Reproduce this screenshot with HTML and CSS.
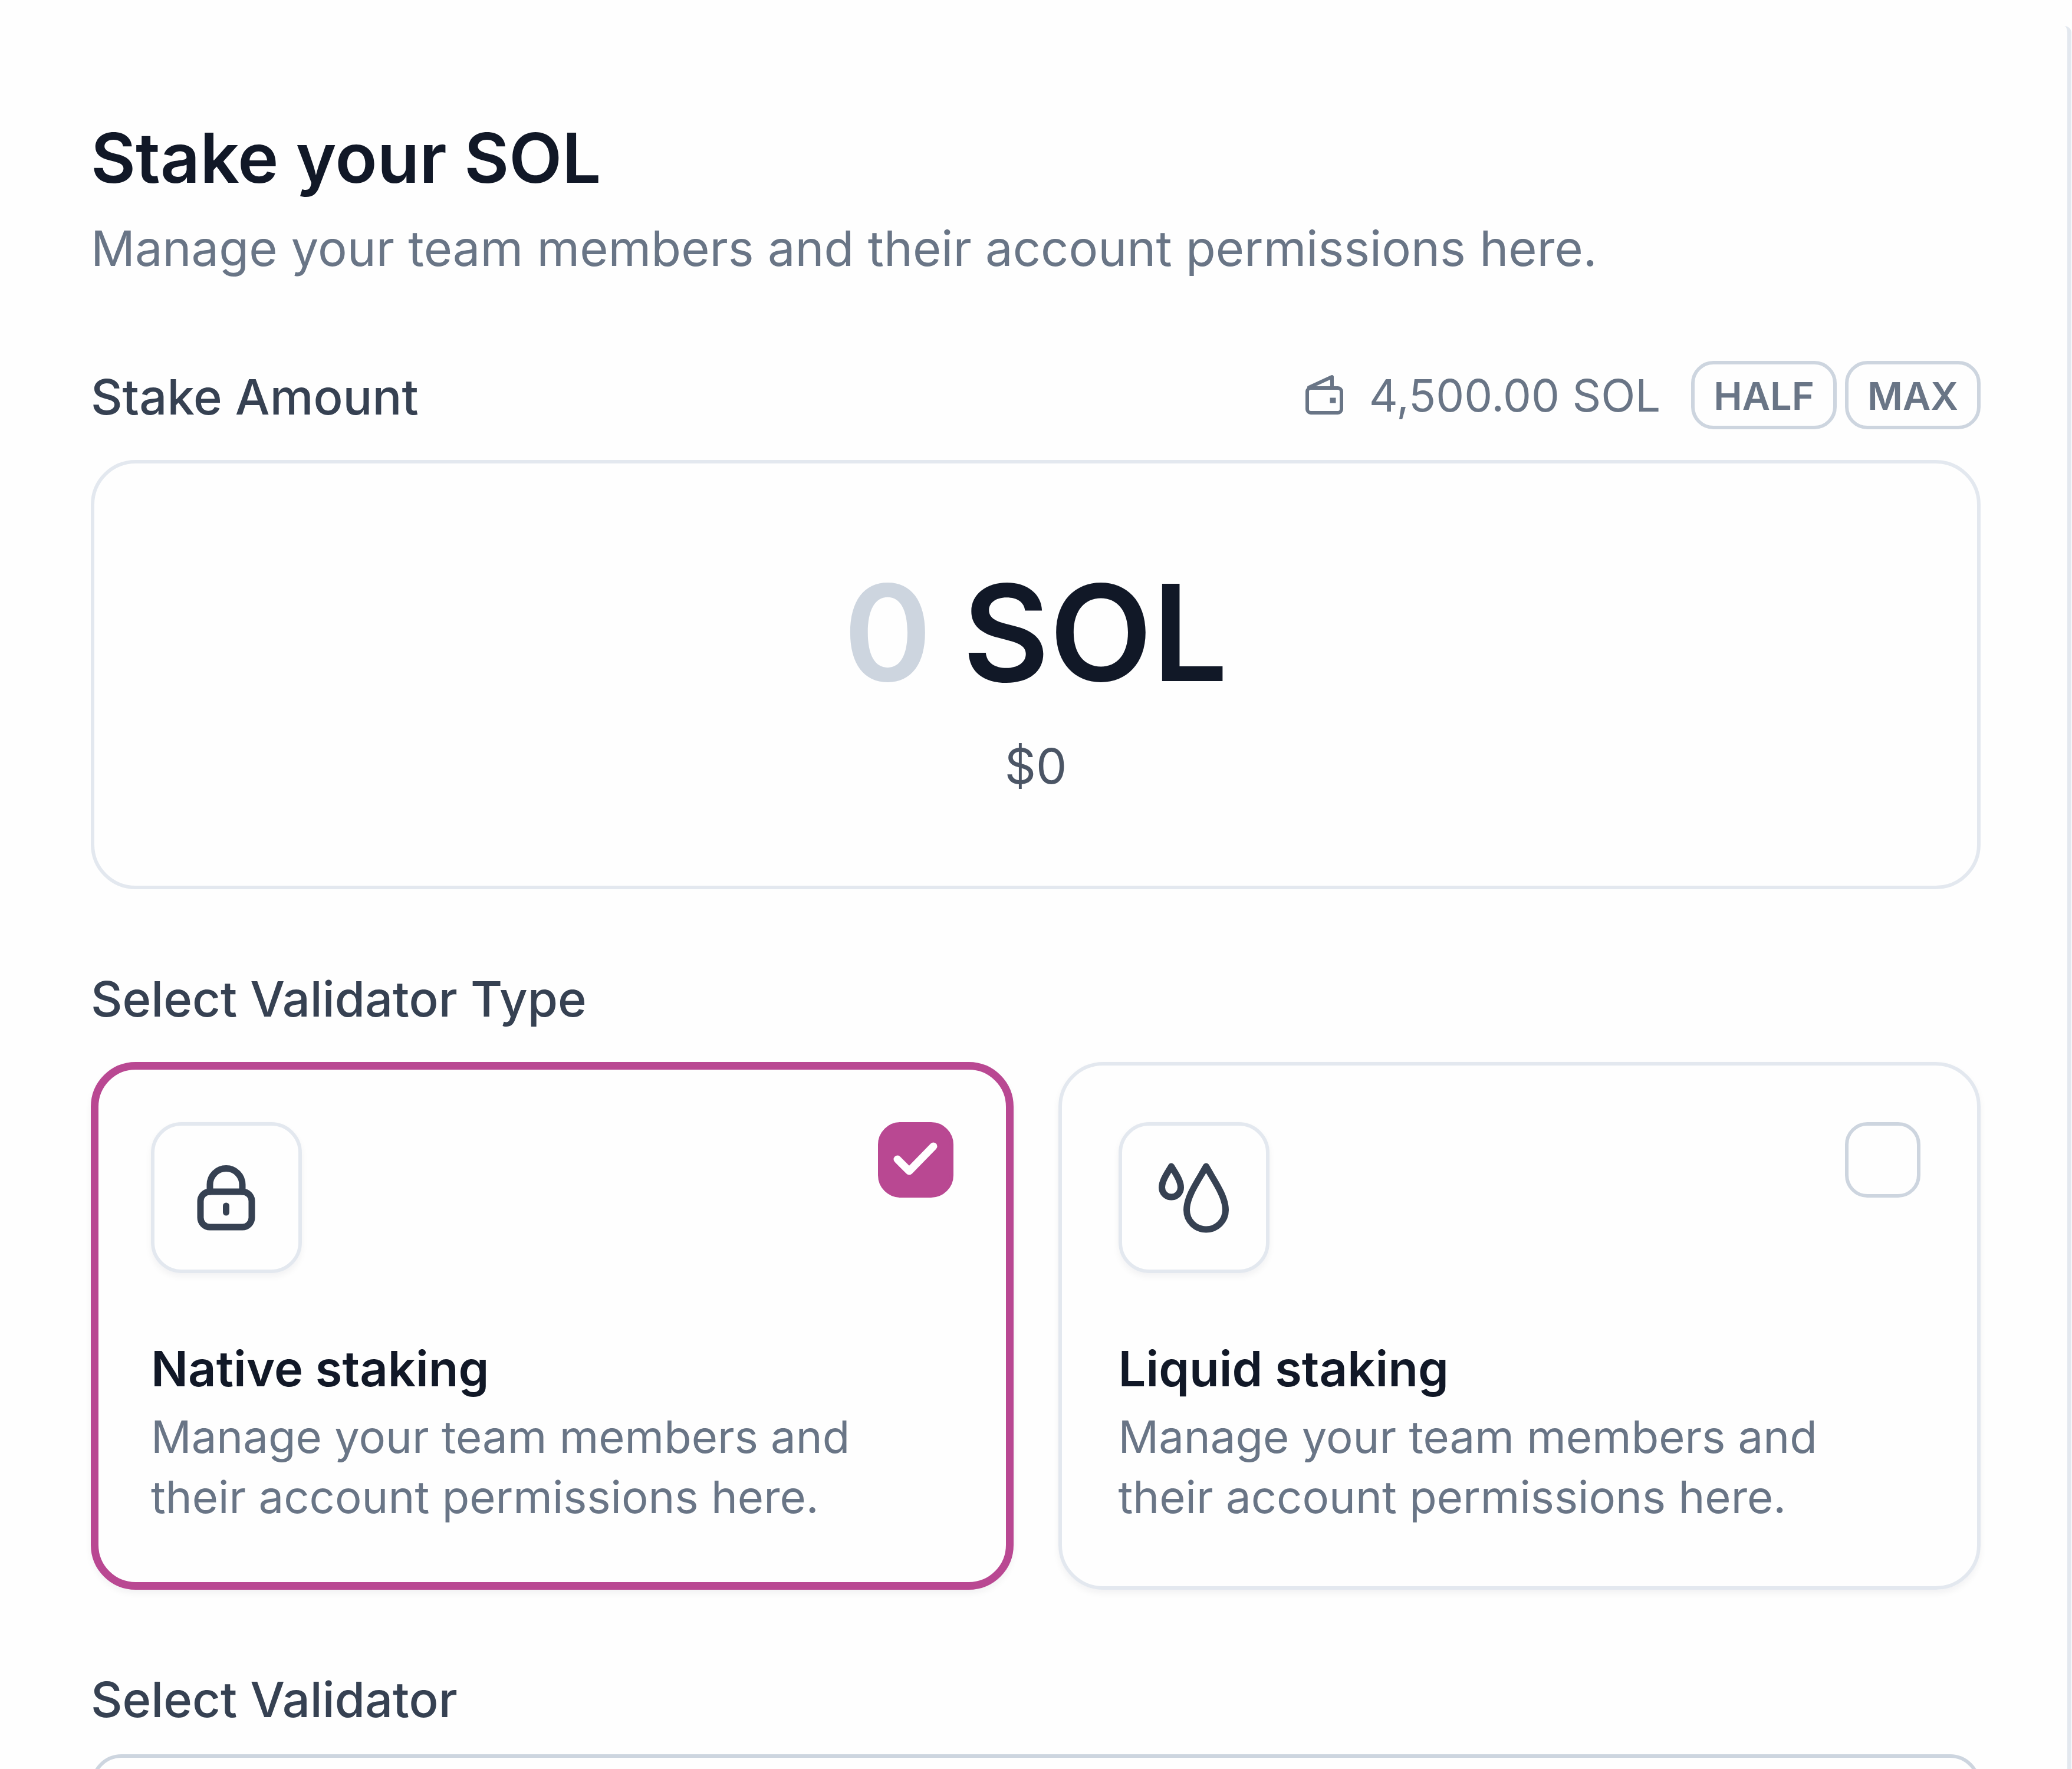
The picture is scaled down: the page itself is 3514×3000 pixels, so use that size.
FILE: index.html
```html
<!DOCTYPE html>
<html lang="en">
<head>
<meta charset="utf-8">
<title>Stake your SOL</title>
<link rel="stylesheet" href="styles.css">
</head>
<body>
<main class="panel">
  <header class="intro">
    <h1 class="title">Stake your SOL</h1>
    <p class="subtitle">Manage your team members and their account permissions here.</p>
  </header>

  <section class="field">
    <div class="field-head">
      <label class="label" for="amount">Stake Amount</label>
      <div class="balance">
        <svg class="wallet-icon" viewBox="0 0 72 72" fill="none" stroke="currentColor" stroke-width="6" stroke-linejoin="round" stroke-linecap="round" aria-hidden="true">
          <rect x="7" y="24" width="58" height="42" rx="6"/>
          <path d="M10 23 L49 5 V23"/>
          <path d="M50 45 h1" stroke-width="9" stroke-linecap="square"/>
        </svg>
        <span class="balance-value">4,500.00 SOL</span>
        <div class="chips">
          <button class="chip" type="button">HALF</button>
          <button class="chip" type="button">MAX</button>
        </div>
      </div>
    </div>
    <div class="amount-box">
      <div class="amount-row">
        <input class="amount-input" id="amount" type="text" inputmode="decimal" placeholder="0">
        <span class="amount-unit">SOL</span>
      </div>
      <p class="amount-fiat">$0</p>
    </div>
  </section>

  <section class="field">
    <h2 class="label">Select Validator Type</h2>
    <div class="cards">
      <label class="card card-selected">
        <span class="card-top">
          <span class="icon-tile">
            <svg class="tile-icon" viewBox="0 0 128 128" fill="none" stroke="currentColor" stroke-width="11" stroke-linecap="round" stroke-linejoin="round" aria-hidden="true">
              <rect x="20" y="54" width="87" height="60" rx="16"/>
              <path d="M36 54 V42 a27.500 27.500 0 0 1 55 0 V54"/>
              <path d="M63.500 78 v11"/>
            </svg>
          </span>
          <span class="check">
            <input class="check-input" type="checkbox" checked>
            <svg class="check-mark" viewBox="0 0 128 128" fill="none" stroke="currentColor" stroke-width="13" stroke-linecap="round" stroke-linejoin="round" aria-hidden="true">
              <path d="M33 63 L53 83 L94 41"/>
            </svg>
          </span>
        </span>
        <span class="card-title">Native staking</span>
        <span class="card-text">Manage your team members and their account permissions here.</span>
      </label>
      <label class="card">
        <span class="card-top">
          <span class="icon-tile">
            <svg class="tile-icon" viewBox="0 0 128 128" fill="none" stroke="currentColor" stroke-width="11" stroke-linecap="round" stroke-linejoin="round" aria-hidden="true">
              <path d="M25.500 11 C19 22 9.500 35 9.500 47 a16 16 0 0 0 32 0 C41.500 35 32 22 25.500 11 Z"/>
              <path d="M84.500 11 C72 34 51.500 61 51.500 85 a33 33 0 0 0 66 0 C117.500 61 97 34 84.500 11 Z"/>
            </svg>
          </span>
          <span class="check">
            <input class="check-input" type="checkbox">
          </span>
        </span>
        <span class="card-title">Liquid staking</span>
        <span class="card-text">Manage your team members and their account permissions here.</span>
      </label>
    </div>
  </section>

  <section class="field field-compact">
    <h2 class="label" id="validator-label">Select Validator</h2>
    <button class="validator-select" type="button" aria-labelledby="validator-label"></button>
  </section>
</main>
</body>
</html>
```
FILE: styles.css
```css
:root {
  --ink: #111827;
  --label: #364152;
  --fiat: #4b5565;
  --muted: #697586;
  --line: #e3e8ef;
  --line-strong: #cdd5df;
  --accent: #b94892;
}

* {
  box-sizing: border-box;
}

body {
  margin: 0;
  background: #fefefe;
  font-family: Inter, "Liberation Sans", sans-serif;
  color: var(--ink);
}

h1, h2, p {
  margin: 0;
  font-weight: inherit;
}

button, input {
  font: inherit;
  color: inherit;
}

.panel {
  height: calc(100vh - 44px);
  margin: 44px 1px 0 0;
  padding: 156px 147px 0 154px;
  border-right: 7px solid var(--line);
  border-top-right-radius: 12px;
  display: flex;
  flex-direction: column;
  gap: 125px;
  overflow: hidden;
}

.title {
  font-size: 117px;
  line-height: 136px;
  font-weight: 600;
}

.subtitle {
  margin-top: 20px;
  font-size: 83px;
  line-height: 131px;
  color: var(--muted);
}

.field {
  display: flex;
  flex-direction: column;
  gap: 46px;
}

.field-compact {
  gap: 32px;
}

.field-head {
  display: flex;
  align-items: flex-start;
  justify-content: space-between;
}

.label {
  font-size: 83px;
  line-height: 122px;
  font-weight: 500;
  color: var(--label);
}

.balance {
  display: flex;
  align-items: center;
  color: var(--muted);
}

.wallet-icon {
  width: 72px;
  height: 72px;
}

.balance-value {
  margin: 0 52px 0 40px;
  font-size: 76px;
  line-height: 116px;
}

.chips {
  display: flex;
  gap: 14px;
}

.chip {
  height: 116px;
  padding: 4px 32px 0;
  border: 6px solid var(--line-strong);
  border-radius: 38px;
  background: none;
  font-size: 65px;
  line-height: 100px;
  font-weight: 600;
}

.amount-box {
  height: 728px;
  padding-top: 8px;
  border: 6px solid var(--line);
  border-radius: 76px;
  display: flex;
  flex-direction: column;
  align-items: center;
  justify-content: center;
  gap: 22px;
}

.amount-row {
  display: flex;
  gap: 52px;
  font-size: 227px;
  line-height: 280px;
  font-weight: 600;
}

.amount-input {
  width: 1ch;
  height: 280px;
  padding: 0;
  border: 0;
  background: none;
  outline: none;
}

.amount-input::placeholder {
  color: var(--line-strong);
  opacity: 1;
}

.amount-fiat {
  font-size: 83px;
  line-height: 128px;
  color: var(--fiat);
}

.cards {
  display: grid;
  grid-template-columns: 1fr 1fr;
  gap: 76px;
}

.card {
  padding: 96px 96px 101px;
  border: 6px solid var(--line);
  border-radius: 76px;
  box-shadow: 0 6px 12px rgba(16, 24, 40, 0.05);
  display: flex;
  flex-direction: column;
}

.card-selected {
  padding: 89px 89px 94px;
  border: 13px solid var(--accent);
}

.card-top {
  display: flex;
  align-items: flex-start;
  justify-content: space-between;
  margin-bottom: 102px;
}

.icon-tile {
  width: 256px;
  height: 256px;
  border: 6px solid var(--line);
  border-radius: 52px;
  box-shadow: 0 6px 12px rgba(16, 24, 40, 0.05);
  display: grid;
  place-items: center;
  color: var(--label);
}

.tile-icon {
  width: 128px;
  height: 128px;
}

.check {
  display: grid;
}

.check-input,
.check-mark {
  grid-area: 1 / 1;
  width: 128px;
  height: 128px;
}

.check-input {
  appearance: none;
  margin: 0;
  border: 6px solid var(--line-strong);
  border-radius: 38px;
}

.check-input:checked {
  border-color: var(--accent);
  background: var(--accent);
}

.check-mark {
  color: #fff;
  pointer-events: none;
}

.card-title {
  font-size: 83px;
  line-height: 120px;
  font-weight: 600;
}

.card-text {
  margin-top: 4px;
  font-size: 76px;
  line-height: 102px;
  color: var(--muted);
}

.validator-select {
  height: 256px;
  border: 6px solid var(--line-strong);
  border-radius: 52px;
  background: none;
}
```
